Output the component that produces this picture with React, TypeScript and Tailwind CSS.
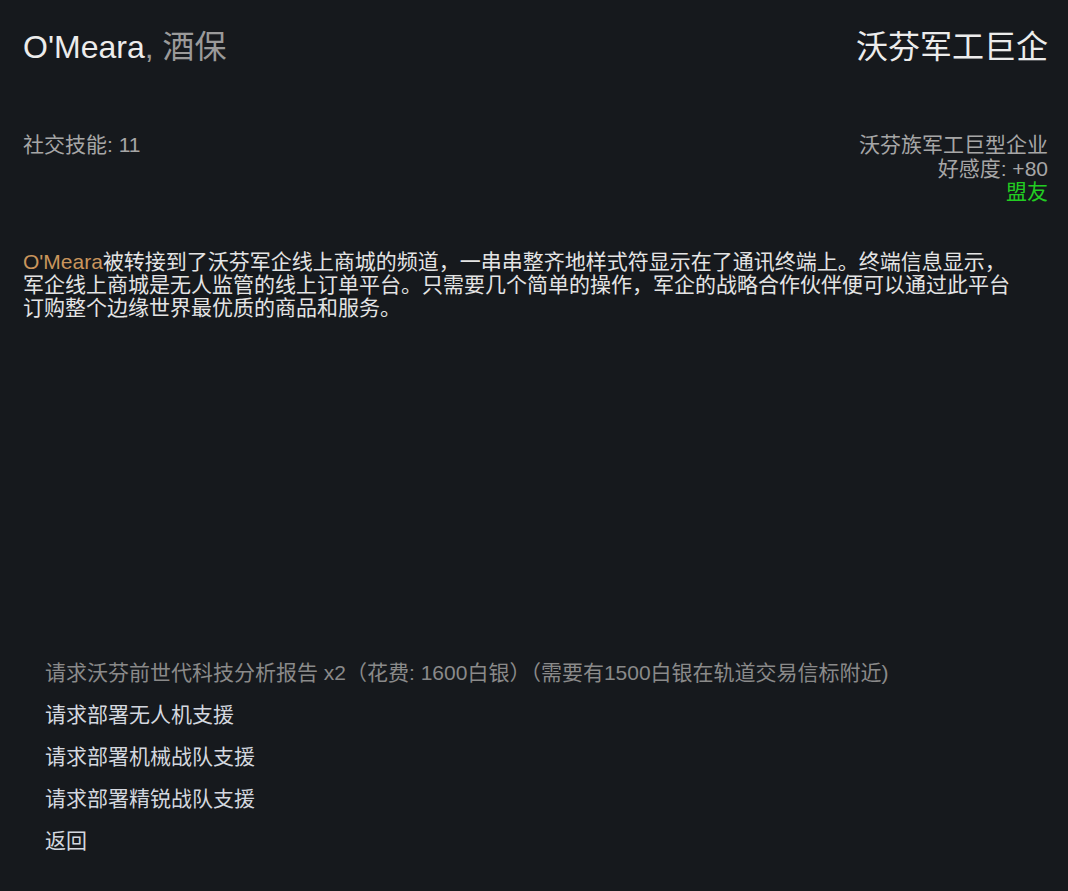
import React from 'react';

const FONT = '[font-family:"Liberation_Sans","Noto_Sans_CJK_SC",sans-serif]';

const OPTIONS: { label: string; disabled?: boolean }[] = [
  { label: '请求沃芬前世代科技分析报告 x2（花费: 1600白银）（需要有1500白银在轨道交易信标附近)', disabled: true },
  { label: '请求部署无人机支援' },
  { label: '请求部署机械战队支援' },
  { label: '请求部署精锐战队支援' },
  { label: '返回' },
];

export default function App() {
  return (
    <div className={`w-[1068px] h-[891px] bg-[#16191d] flex flex-col pl-[23px] pr-[20px] ${FONT}`}>
      {/* Header */}
      <div className="flex justify-between items-center pt-[23px] h-[70px]">
        <div className="text-[32px] leading-[38px] text-[#ececec]">
          O'Meara<span className="text-[#9a9a9a]">, 酒保</span>
        </div>
        <div className="text-[32px] leading-[38px] text-[#ececec]">沃芬军工巨企</div>
      </div>

      {/* Stats */}
      <div className="flex justify-between mt-[63px] text-[21px] leading-[23.5px] text-[#a6a6a6]">
        <div>社交技能: 11</div>
        <div className="flex flex-col items-end">
          <div>沃芬族军工巨型企业</div>
          <div>好感度: +80</div>
          <div className="text-[#22cc22]">盟友</div>
        </div>
      </div>

      {/* Description */}
      <p className="mt-[46px] text-[21px] leading-[23px] text-[#e4e4e4]">
        <span className="text-[#c9955c]">O'Meara</span>
        被转接到了沃芬军企线上商城的频道，一串串整齐地样式符显示在了通讯终端上。终端信息显示，
        <br />
        军企线上商城是无人监管的线上订单平台。只需要几个简单的操作，军企的战略合作伙伴便可以通过此平台
        <br />
        订购整个边缘世界最优质的商品和服务。
      </p>

      {/* Options */}
      <div className="mt-auto mb-[39px] pl-[22px] flex flex-col gap-[19px] text-[21px] leading-[23px]">
        {OPTIONS.map(o => (
          <div key={o.label} className={o.disabled ? 'text-[#8a8a8a]' : 'text-[#d3d7df]'}>
            {o.label}
          </div>
        ))}
      </div>
    </div>
  );
}
